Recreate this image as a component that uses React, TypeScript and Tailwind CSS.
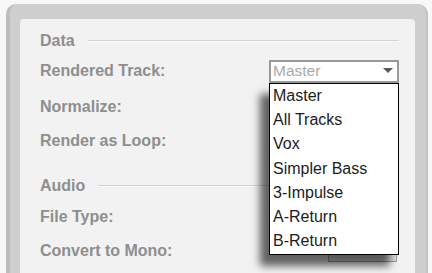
import React from "react";

const font = { fontFamily: '"Liberation Sans", Arial, sans-serif' };

function Header({ title }: { title: string }) {
  return (
    <div className="flex h-[24px] items-center gap-[13px]">
      <span className="text-[16px] font-bold leading-none text-[#8e8e8e]">{title}</span>
      <div className="flex flex-1 flex-col">
        <div className="h-px bg-[#d2d2d2]" />
        <div className="h-px bg-[#fafafa]" />
      </div>
    </div>
  );
}

function Row({ label, children, h = "h-[34px]" }: { label: string; children?: React.ReactNode; h?: string }) {
  return (
    <div className={`flex ${h} items-center justify-between`}>
      <span className="text-[16px] font-bold leading-none text-[#8e8e8e]">{label}</span>
      {children}
    </div>
  );
}

const items = ["Master", "All Tracks", "Vox", "Simpler Bass", "3-Impulse", "A-Return", "B-Return"];

export default function App() {
  return (
    <div className="h-[273px] w-[432px] overflow-hidden bg-[#f8f8f8] pl-[6px] pr-[4px] pt-[4px]" style={font}>
      <div className="h-[290px] rounded-t-[10px] border-l-[4px] border-r-[2px] border-l-[#bdbdbd] border-r-[#c2c2c2] bg-[#cfcfcf] pl-[10px] pr-[11px] pt-[15px]">
        <div className="h-[280px] rounded-t-[4px] bg-[#f2f2f2] pl-[20px] pr-[16px] pt-[10px]">
          <Header title="Data" />
          <Row label="Rendered Track:" h="h-[36px]">
            <div className="relative z-10 w-[130px]">
              <div className="flex h-[23px] items-center justify-between border-2 border-[#999999] bg-white pl-[2px] pr-[4px]">
                <span className="text-[15.5px] leading-none text-[#a9a9a9]">Master</span>
                <svg width="10" height="6" viewBox="0 0 10 6">
                  <path d="M0 0 L10 0 L5 5 Z" fill="#5a5a5a" />
                </svg>
              </div>
              <div className="absolute left-0 top-[23px] w-[130px] border border-black bg-white shadow-[-9px_11px_8px_rgba(0,0,0,0.6)]">
                {items.map((it) => (
                  <div key={it} className="flex h-[24.3px] items-center pl-[3px] text-[16px] leading-none text-[#1c1c1c]">
                    {it}
                  </div>
                ))}
              </div>
            </div>
          </Row>
          <Row label="Normalize:" h="h-[35px]" />
          <Row label="Render as Loop:" h="h-[33px]" />
          <div className="h-[17px]" />
          <Header title="Audio" />
          <Row label="File Type:" h="h-[38px]" />
          <Row label="Convert to Mono:" h="h-[30px]">
            <div className="mr-[2px] h-[22px] w-[69px] border border-[#9c9c9c] bg-[#dedede]" />
          </Row>
        </div>
      </div>
    </div>
  );
}
